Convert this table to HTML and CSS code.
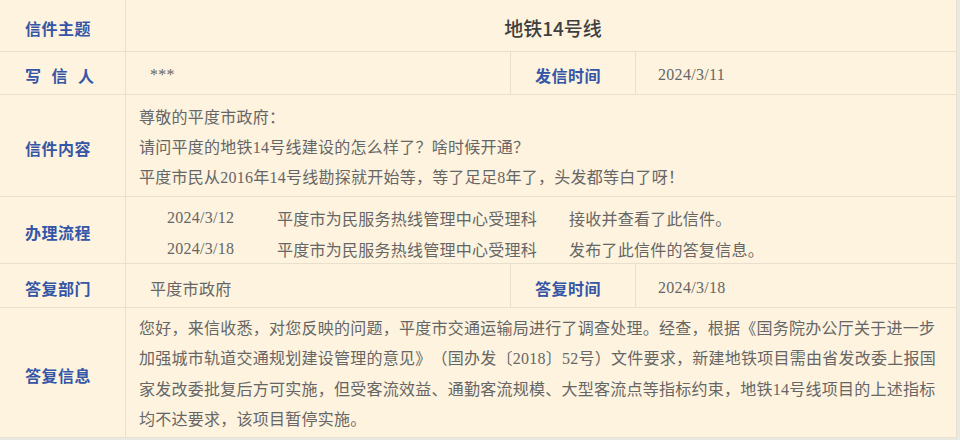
FILE: index.html
```html
<!DOCTYPE html>
<html lang="zh-CN">
<head>
<meta charset="utf-8">
<title>信件详情</title>
<link rel="stylesheet" href="styles.css">
</head>
<body>
<div class="letter">
  <div class="cell label">信件主题</div>
  <div class="cell title span3">地铁14号线</div>

  <div class="cell label"><span class="spaced">写信人</span></div>
  <div class="cell value">***</div>
  <div class="cell label label-mid">发信时间</div>
  <div class="cell value value-right">2024/3/11</div>

  <div class="cell label">信件内容</div>
  <div class="cell text span3">
    <p>尊敬的平度市政府：</p>
    <p>请问平度的地铁14号线建设的怎么样了？啥时候开通？</p>
    <p>平度市民从2016年14号线勘探就开始等，等了足足8年了，头发都等白了呀！</p>
  </div>

  <div class="cell label">办理流程</div>
  <div class="cell flow span3">
    <div class="flow-grid">
      <span>2024/3/12</span><span>平度市为民服务热线管理中心受理科</span><span>接收并查看了此信件。</span>
      <span>2024/3/18</span><span>平度市为民服务热线管理中心受理科</span><span>发布了此信件的答复信息。</span>
    </div>
  </div>

  <div class="cell label">答复部门</div>
  <div class="cell value">平度市政府</div>
  <div class="cell label label-mid">答复时间</div>
  <div class="cell value value-right">2024/3/18</div>

  <div class="cell label">答复信息</div>
  <div class="cell text reply span3">
    <p>您好，来信收悉，对您反映的问题，平度市交通运输局进行了调查处理。经查，根据《国务院办公厅关于进一步加强城市轨道交通规划建设管理的意见》（国办发〔2018〕52号）文件要求，新建地铁项目需由省发改委上报国家发改委批复后方可实施，但受客流效益、通勤客流规模、大型客流点等指标约束，地铁14号线项目的上述指标均不达要求，该项目暂停实施。</p>
  </div>
</div>
</body>
</html>
```

FILE: styles.css
```css
html, body {
  margin: 0;
  padding: 0;
}

body {
  background: #e9e8e3;
  font-family: "Liberation Serif", "Noto Sans CJK SC", serif;
  font-size: 16px;
  color: #666;
  height: 440px;
  overflow: hidden;
  text-spacing-trim: space-all;
}

.letter {
  width: 957px;
  box-sizing: border-box;
  display: grid;
  grid-template-columns: 125px 384px 124px 320px;
  grid-template-rows: 51px 42px 101px 66px 43px 129px;
  gap: 1px;
  padding: 0 1px 1px 0;
  background: #e8dfcc;
}

.cell {
  background: #fdf3df;
  display: flex;
  align-items: center;
  box-sizing: border-box;
  padding-top: 4px;
  min-width: 0;
}

.span3 {
  grid-column: span 3;
}

.label {
  font-family: "Noto Sans CJK SC", sans-serif;
  font-weight: bold;
  color: #3556a6;
  letter-spacing: 0.5px;
  padding-left: 25px;
}

.label-mid {
  padding-left: 24px;
}

.spaced {
  letter-spacing: 10.5px;
}

.title {
  font-family: "Noto Sans CJK SC", sans-serif;
  font-size: 19px;
  font-weight: 500;
  color: #3f3f3f;
  justify-content: center;
  padding-left: 24px;
}

.value {
  padding-left: 24px;
  letter-spacing: 0.3px;
}

.value-right {
  padding-left: 22px;
}

.text {
  flex-direction: column;
  align-items: flex-start;
  justify-content: center;
  padding-left: 13px;
  padding-right: 16px;
  line-height: 30px;
  letter-spacing: 0.25px;
  text-spacing-trim: space-all;
}

.text p {
  margin: 0;
}

.reply {
  line-height: 30.5px;
}

.flow {
  padding-left: 41px;
  padding-top: 6px;
  letter-spacing: 0.25px;
}

.flow-grid {
  display: grid;
  grid-template-columns: 110px 292px auto;
  grid-auto-rows: 31px;
  align-items: center;
}
```
